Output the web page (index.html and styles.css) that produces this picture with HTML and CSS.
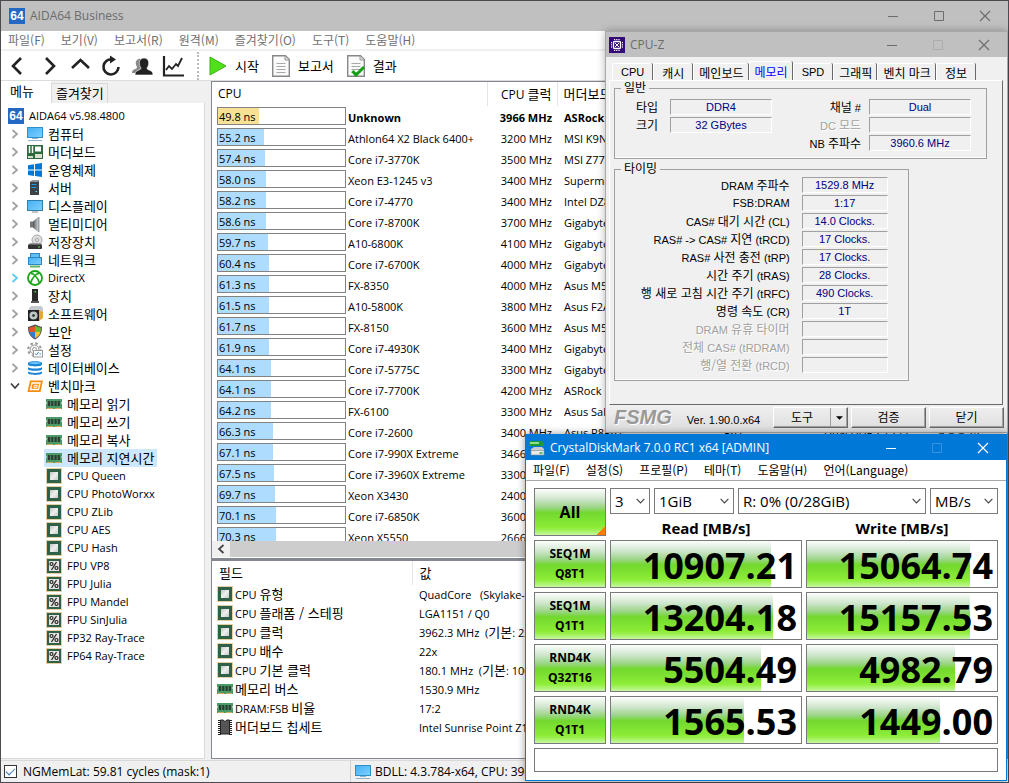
FILE: index.html
```html
<!DOCTYPE html>
<html lang="ko">
<head>
<meta charset="utf-8">
<title>AIDA64 Business</title>
<link rel="stylesheet" href="styles.css">
</head>
<body>
<svg class="defs" aria-hidden="true">
  <defs>
    <linearGradient id="g-screen" x1="0" y1="0" x2="1" y2="1"><stop offset="0" stop-color="#43b0f4"/><stop offset="1" stop-color="#7fd0ff"/></linearGradient>
    <linearGradient id="g-die" x1="0" y1="0" x2="1" y2="1"><stop offset="0" stop-color="#c4c4c4"/><stop offset=".5" stop-color="#efefef"/><stop offset="1" stop-color="#c9c9c9"/></linearGradient>
    <linearGradient id="g-metal" x1="0" y1="0" x2="1" y2="0"><stop offset="0" stop-color="#555"/><stop offset="1" stop-color="#c4ccd2"/></linearGradient>
  </defs>
  <symbol id="i-64" viewBox="0 0 16 16"><rect width="16" height="16" fill="#2468c4"/><text x="8" y="12" text-anchor="middle" font-family="Liberation Sans, sans-serif" font-size="12" font-weight="bold" fill="#fff">64</text></symbol>
  <symbol id="i-pc" viewBox="0 0 16 16"><rect x=".5" y="1.500" width="15" height="10" fill="url(#g-screen)" stroke="#2f8fc9"/><path d="M5 12.500h6M1 14.500h14" stroke="#8fb4c9" stroke-width="1"/></symbol>
  <symbol id="i-display" viewBox="0 0 16 16"><rect x=".5" y="2.500" width="15" height="10" fill="url(#g-screen)" stroke="#2f7fae"/><path d="M5 14h6" stroke="#888"/></symbol>
  <symbol id="i-board" viewBox="0 0 16 16"><rect y="1" width="16" height="14" fill="#2d6b3d"/><path d="M2.500 2v7M5.500 2v7" stroke="#fff" stroke-width="1.500"/><rect x="8" y="2.500" width="6" height="5" fill="#fff"/><path d="M1 12h5v2H1zM8 10h7v4H8z" fill="#d8e0d0"/></symbol>
  <symbol id="i-win" viewBox="0 0 16 16"><path d="M1 3.200 7 2.300V7.600H1zM8 2.100 15 1v6.600H8zM1 8.600h6V14l-6-.9zM8 8.600h7V15l-7-1z" fill="#0078d7"/></symbol>
  <symbol id="i-server" viewBox="0 0 16 16"><path d="M3 2l2-1.500h7V15H3z" fill="#3b4248"/><path d="M3 2l2-1.500h7L11 2z" fill="#8b9299"/><path d="M4.500 4.500h5M4.500 7.500h5" stroke="#1e9be8"/><path d="M8.500 11.500h1.500" stroke="#6cdcff"/></symbol>
  <symbol id="i-speaker" viewBox="0 0 16 16"><path d="M3 5.500h3v6H3z" fill="#777"/><path d="M6 5.500 11 1v15l-5-4.500z" fill="url(#g-metal)"/><path d="M11 1h1.500v15H11z" fill="#9aa3aa"/></symbol>
  <symbol id="i-disk" viewBox="0 0 16 16"><circle cx="10" cy="6" r="5" fill="#ddd" stroke="#aaa"/><circle cx="10" cy="6" r="1.500" fill="#fff" stroke="#999"/><path d="M1 11l2-2h11l1 2z" fill="#999"/><rect x="1" y="10.500" width="14" height="4.500" rx="1" fill="#333"/><path d="M11 13h2" stroke="#5de05d"/></symbol>
  <symbol id="i-net" viewBox="0 0 16 16"><rect x="3.500" y="1.500" width="9" height="7" fill="#5fc0f6" stroke="#2f86c2"/><rect x="1.500" y="5.500" width="13" height="7" fill="url(#g-screen)" stroke="#2f86c2"/><path d="M3 14.500h10" stroke="#5cb860" stroke-width="2"/></symbol>
  <symbol id="i-xbox" viewBox="0 0 16 16"><circle cx="8" cy="8" r="7" fill="#fff" stroke="#16a516" stroke-width="1.800"/><path d="M3.500 13C4.500 9.500 6.500 7 8 5.500 9.500 7 11.500 9.500 12.500 13M4 3.500c1.500 0 3 1 4 2 1-1 2.500-2 4-2" fill="none" stroke="#16a516" stroke-width="1.600"/></symbol>
  <symbol id="i-device" viewBox="0 0 16 16"><path d="M5 1h6v12H5z" fill="#2a2a2a"/><path d="M4 13h8v2H4z" fill="#555"/><path d="M7.500 3h1.500v1.500H7.500z" fill="#4fdc4f"/></symbol>
  <symbol id="i-soft" viewBox="0 0 16 16"><path d="M2 2l2-2h10l2 2v8l-4 5H2z" fill="#c4c9cd"/><path d="M12 4l4 2v6l-4 3z" fill="#e8a33c"/><rect x="1" y="4" width="11" height="11" fill="#222"/><circle cx="6.500" cy="9.500" r="4" fill="#bfc6ca"/><circle cx="6.500" cy="9.500" r="1.300" fill="#222"/></symbol>
  <symbol id="i-shield" viewBox="0 0 16 16"><path d="M8 .5 15 3c0 6-2 10-7 12.500C3 13 1 9 1 3z" fill="#555"/><path d="M8 2v6H2.500C2 6.500 2 5 2 3.700z" fill="#e8502a"/><path d="M8 2l6 1.700C14 5 14 6.500 13.500 8H8z" fill="#6cba2d"/><path d="M2.500 8H8v6.300C5 12.800 3.300 11 2.500 8z" fill="#2a7fd4"/><path d="M8 8h5.500c-.8 3-2.500 4.800-5.500 6.300z" fill="#f4c22a"/></symbol>
  <symbol id="i-gear" viewBox="0 0 16 16"><circle cx="7.500" cy="7.500" r="4.500" fill="#f2f2f2" stroke="#999"/><circle cx="7.500" cy="7.500" r="6.300" fill="none" stroke="#999" stroke-width="2" stroke-dasharray="2.500 2.450"/><circle cx="7.500" cy="7.500" r="2" fill="#fff" stroke="#999"/><rect x="6.500" y="8.500" width="9" height="6.500" fill="#fff" stroke="#999"/><path d="M8 11.500l1.500 1.500 2-3M12.500 12h1.500" fill="none" stroke="#3a8ad0"/></symbol>
  <symbol id="i-db" viewBox="0 0 16 16"><path d="M1 3c0-2.500 14-2.500 14 0v1.500c0 2.500-14 2.500-14 0zM1 7.300c2 1.700 12 1.700 14 0v1.600c0 2.500-14 2.500-14 0zM1 11.600c2 1.700 12 1.700 14 0V13c0 2.500-14 2.500-14 0z" fill="#1784d8"/><ellipse cx="8" cy="3" rx="6" ry="1.200" fill="#6cc0f4"/></symbol>
  <symbol id="i-bench" viewBox="0 0 16 16"><path d="M3 2.500h13L13.500 14H.5z" fill="#f78d0c"/><path d="M5 5h8l-1.500 6.500h-8z" fill="none" stroke="#fff" stroke-width="1.300"/><path d="M7.300 7.300h3l-.5 2h-3z" fill="none" stroke="#fff"/></symbol>
  <symbol id="i-ram" viewBox="0 0 16 16"><path d="M0 3h16v3l-1 1 1 1v5H0V8l1-1-1-1z" fill="#4a9a68"/><path d="M2 5h2.200v5H2zM5.200 5h2.200v5H5.200zM8.500 5h2.200v5H8.500zM11.700 5h2.200v5h-2.200z" fill="#2c3c32"/><path d="M1 12.500h6M9 12.500h6" stroke="#d8a860"/></symbol>
  <symbol id="i-cpu" viewBox="0 0 16 16"><rect x=".5" y=".5" width="15" height="15" fill="none" stroke="#c8a040" stroke-dasharray="1 1"/><rect x="1" y="1" width="14" height="14" fill="#2f6048"/><rect x="4" y="4" width="8" height="8" fill="url(#g-die)"/></symbol>
  <symbol id="i-fpu" viewBox="0 0 16 16"><rect x=".5" y=".5" width="15" height="15" fill="none" stroke="#c8a040" stroke-dasharray="1 1"/><rect x="1" y="1" width="14" height="14" fill="#2f6048"/><rect x="3" y="3" width="10" height="10" fill="#e4e4e4"/><path d="M5.500 12 10.500 4" stroke="#222" stroke-width="1.200"/><circle cx="5.500" cy="6" r="1.500" fill="none" stroke="#222" stroke-width="1.200"/><circle cx="10.500" cy="10" r="1.500" fill="none" stroke="#222" stroke-width="1.200"/></symbol>
  <symbol id="i-chip" viewBox="0 0 16 16"><path d="M2.500 1v15M13.500 1v15" stroke="#222" stroke-width="3" stroke-dasharray="1 1"/><path d="M3.500 1h2.500l2 1.500L10 1h2.500v14h-9z" fill="#555" stroke="#222"/></symbol>
  <symbol id="i-doc" viewBox="0 0 18 22"><path d="M.7.7h12.800l3.800 3.800v16.800H.7z" fill="#fafafa" stroke="#888" stroke-width="1.400"/><path d="M13 1v4h4" fill="#ddd" stroke="#999"/><path d="M4.500 8.500h9M4.500 11.500h9M4.500 14.500h9M4.500 17.500h9" stroke="#a8a8a8"/></symbol>
  <symbol id="i-chev" viewBox="0 0 8 10"><path d="M1.500 1 6 5 1.500 9" fill="none" stroke="currentColor" stroke-width="1.700"/></symbol>
  <symbol id="i-chevdown" viewBox="0 0 10 6"><path d="M.7.7 5 5 9.300.7" fill="none" stroke="currentColor" stroke-width="1.300"/></symbol>
  <symbol id="i-min" viewBox="0 0 12 12"><path d="M1 6.500h10" stroke="currentColor"/></symbol>
  <symbol id="i-max" viewBox="0 0 12 12"><path d="M1.500 1.500h9v9h-9z" fill="none" stroke="currentColor"/></symbol>
  <symbol id="i-close" viewBox="0 0 12 12"><path d="M1 1l10 10M11 1 1 11" stroke="currentColor" stroke-width="1.200"/></symbol>
</svg>

<main class="window aida">
  <header class="titlebar">
    <svg class="icon"><use href="#i-64"/></svg>
    <h1 class="title">AIDA64 Business</h1>
    <button class="winbtn" aria-label="최소화"><svg><use href="#i-min"/></svg></button>
    <button class="winbtn" aria-label="최대화"><svg><use href="#i-max"/></svg></button>
    <button class="winbtn" aria-label="닫기"><svg><use href="#i-close"/></svg></button>
  </header>
  <nav class="menubar ko">
    <button>파일(F)</button><button>보기(V)</button><button>보고서(R)</button><button>원격(M)</button><button>즐겨찾기(O)</button><button>도구(T)</button><button>도움말(H)</button>
  </nav>
  <div class="toolbar ko">
    <button class="tool" aria-label="뒤로"><svg viewBox="0 0 22 22"><path d="M14 3 6 11l8 8" fill="none" stroke="#222" stroke-width="2.600"/></svg></button>
    <button class="tool" aria-label="앞으로"><svg viewBox="0 0 22 22"><path d="M8 3l8 8-8 8" fill="none" stroke="#222" stroke-width="2.600"/></svg></button>
    <button class="tool" aria-label="위로"><svg viewBox="0 0 22 22"><path d="M3 13 11.500 5 20 13" fill="none" stroke="#222" stroke-width="2.600"/></svg></button>
    <button class="tool" aria-label="새로 고침"><svg viewBox="0 0 22 22"><path d="M12 4.500A7.500 7.500 0 1 0 18.500 12" fill="none" stroke="#222" stroke-width="2.600"/><path d="M10 .5l6 4-6 4z" fill="#222"/></svg></button>
    <button class="tool" aria-label="사용자"><svg viewBox="0 0 22 22"><path d="M1 18c0-5 5-3 5-6-3-5 0-9 4-8v14z" fill="#888"/><path d="M4 20c0-6 6-4 6-7-3-4-2-10 3-10s6 6 3 10c0 3 6 1 6 7z" fill="#222" stroke="#fff" stroke-width=".6"/></svg></button>
    <button class="tool" aria-label="그래프"><svg viewBox="0 0 22 22"><path d="M2 1v19.500h20" fill="none" stroke="#222" stroke-width="2.200"/><path d="M4 15l3-4 3 3 4-5 2 2 4-8" fill="none" stroke="#222" stroke-width="1.800"/></svg></button>
    <span class="grip"></span>
    <button class="tool-text"><svg viewBox="0 0 18 22"><path d="M1 2l16 9-16 9z" fill="#4fe01a" stroke="#37b313"/></svg>시작</button>
    <button class="tool-text"><svg><use href="#i-doc"/></svg>보고서</button>
    <button class="tool-text"><svg viewBox="0 0 18 22"><use href="#i-doc" width="18" height="22"/><path d="M5.500 16l3.500 4 8-8" fill="none" stroke="#14a014" stroke-width="3"/></svg>결과</button>
  </div>

  <div class="workspace">
    <aside class="side">
      <div class="side-tabs ko" role="tablist"><button role="tab" aria-selected="true">메뉴</button><button role="tab">즐겨찾기</button></div>
      <ul class="tree">
        <li class="root"><svg class="icon"><use href="#i-64"/></svg>AIDA64 v5.98.4800</li>
        <li class="ko"><svg class="chev"><use href="#i-chev"/></svg><svg class="icon"><use href="#i-pc"/></svg>컴퓨터</li>
        <li class="ko"><svg class="chev"><use href="#i-chev"/></svg><svg class="icon"><use href="#i-board"/></svg>머더보드</li>
        <li class="ko"><svg class="chev"><use href="#i-chev"/></svg><svg class="icon"><use href="#i-win"/></svg>운영체제</li>
        <li class="ko"><svg class="chev"><use href="#i-chev"/></svg><svg class="icon"><use href="#i-server"/></svg>서버</li>
        <li class="ko"><svg class="chev"><use href="#i-chev"/></svg><svg class="icon"><use href="#i-display"/></svg>디스플레이</li>
        <li class="ko"><svg class="chev"><use href="#i-chev"/></svg><svg class="icon"><use href="#i-speaker"/></svg>멀티미디어</li>
        <li class="ko"><svg class="chev"><use href="#i-chev"/></svg><svg class="icon"><use href="#i-disk"/></svg>저장장치</li>
        <li class="ko"><svg class="chev"><use href="#i-chev"/></svg><svg class="icon"><use href="#i-net"/></svg>네트워크</li>
        <li class="hot"><svg class="chev"><use href="#i-chev"/></svg><svg class="icon"><use href="#i-xbox"/></svg>DirectX</li>
        <li class="ko"><svg class="chev"><use href="#i-chev"/></svg><svg class="icon"><use href="#i-device"/></svg>장치</li>
        <li class="ko"><svg class="chev"><use href="#i-chev"/></svg><svg class="icon"><use href="#i-soft"/></svg>소프트웨어</li>
        <li class="ko"><svg class="chev"><use href="#i-chev"/></svg><svg class="icon"><use href="#i-shield"/></svg>보안</li>
        <li class="ko"><svg class="chev"><use href="#i-chev"/></svg><svg class="icon"><use href="#i-gear"/></svg>설정</li>
        <li class="ko"><svg class="chev"><use href="#i-chev"/></svg><svg class="icon"><use href="#i-db"/></svg>데이터베이스</li>
        <li class="ko open"><svg class="chev"><use href="#i-chev"/></svg><svg class="icon"><use href="#i-bench"/></svg>벤치마크</li>
        <li class="child ko"><svg class="icon"><use href="#i-ram"/></svg>메모리 읽기</li>
        <li class="child ko"><svg class="icon"><use href="#i-ram"/></svg>메모리 쓰기</li>
        <li class="child ko"><svg class="icon"><use href="#i-ram"/></svg>메모리 복사</li>
        <li class="child ko selected"><svg class="icon"><use href="#i-ram"/></svg>메모리 지연시간</li>
        <li class="child"><svg class="icon"><use href="#i-cpu"/></svg>CPU Queen</li>
        <li class="child"><svg class="icon"><use href="#i-cpu"/></svg>CPU PhotoWorxx</li>
        <li class="child"><svg class="icon"><use href="#i-cpu"/></svg>CPU ZLib</li>
        <li class="child"><svg class="icon"><use href="#i-cpu"/></svg>CPU AES</li>
        <li class="child"><svg class="icon"><use href="#i-cpu"/></svg>CPU Hash</li>
        <li class="child"><svg class="icon"><use href="#i-fpu"/></svg>FPU VP8</li>
        <li class="child"><svg class="icon"><use href="#i-fpu"/></svg>FPU Julia</li>
        <li class="child"><svg class="icon"><use href="#i-fpu"/></svg>FPU Mandel</li>
        <li class="child"><svg class="icon"><use href="#i-fpu"/></svg>FPU SinJulia</li>
        <li class="child"><svg class="icon"><use href="#i-fpu"/></svg>FP32 Ray-Trace</li>
        <li class="child"><svg class="icon"><use href="#i-fpu"/></svg>FP64 Ray-Trace</li>
      </ul>
    </aside>

    <div class="content">
      <section class="panel results">
        <div class="results-view">
          <table class="bench">
            <colgroup><col class="c-bar"><col class="c-name"><col class="c-clock"><col class="c-board"><col class="c-set"><col class="c-mem"><col></colgroup>
            <thead><tr><th colspan="2">CPU</th><th class="num">CPU <span class="ko">클럭</span></th><th class="ko">머더보드</th><th></th><th></th><th></th></tr></thead>
            <tbody>
              <tr class="own"><td><div class="bar"><i style="width:32%"></i><span>49.8 ns</span></div></td><td>Unknown</td><td class="num">3966 MHz</td><td>ASRock</td></tr>
              <tr><td><div class="bar"><i style="width:36%"></i><span>55.2 ns</span></div></td><td>Athlon64 X2 Black 6400+</td><td class="num">3200 MHz</td><td>MSI K9N</td></tr>
              <tr><td><div class="bar"><i style="width:37%"></i><span>57.4 ns</span></div></td><td>Core i7-3770K</td><td class="num">3500 MHz</td><td>MSI Z77</td></tr>
              <tr><td><div class="bar"><i style="width:38%"></i><span>58.0 ns</span></div></td><td>Xeon E3-1245 v3</td><td class="num">3400 MHz</td><td>Supermicro</td></tr>
              <tr><td><div class="bar"><i style="width:38%"></i><span>58.2 ns</span></div></td><td>Core i7-4770</td><td class="num">3400 MHz</td><td>Intel DZ8</td></tr>
              <tr><td><div class="bar"><i style="width:38%"></i><span>58.6 ns</span></div></td><td>Core i7-8700K</td><td class="num">3700 MHz</td><td>Gigabyte</td></tr>
              <tr><td><div class="bar"><i style="width:39%"></i><span>59.7 ns</span></div></td><td>A10-6800K</td><td class="num">4100 MHz</td><td>Gigabyte</td></tr>
              <tr><td><div class="bar"><i style="width:40%"></i><span>60.4 ns</span></div></td><td>Core i7-6700K</td><td class="num">4000 MHz</td><td>Gigabyte</td></tr>
              <tr><td><div class="bar"><i style="width:40%"></i><span>61.3 ns</span></div></td><td>FX-8350</td><td class="num">4000 MHz</td><td>Asus M5</td></tr>
              <tr><td><div class="bar"><i style="width:40%"></i><span>61.5 ns</span></div></td><td>A10-5800K</td><td class="num">3800 MHz</td><td>Asus F2A</td></tr>
              <tr><td><div class="bar"><i style="width:40%"></i><span>61.7 ns</span></div></td><td>FX-8150</td><td class="num">3600 MHz</td><td>Asus M5</td></tr>
              <tr><td><div class="bar"><i style="width:40%"></i><span>61.9 ns</span></div></td><td>Core i7-4930K</td><td class="num">3400 MHz</td><td>Gigabyte</td></tr>
              <tr><td><div class="bar"><i style="width:42%"></i><span>64.1 ns</span></div></td><td>Core i7-5775C</td><td class="num">3300 MHz</td><td>Gigabyte</td></tr>
              <tr><td><div class="bar"><i style="width:42%"></i><span>64.1 ns</span></div></td><td>Core i7-7700K</td><td class="num">4200 MHz</td><td>ASRock</td></tr>
              <tr><td><div class="bar"><i style="width:42%"></i><span>64.2 ns</span></div></td><td>FX-6100</td><td class="num">3300 MHz</td><td>Asus Sab</td></tr>
              <tr><td><div class="bar"><i style="width:43%"></i><span>66.3 ns</span></div></td><td>Core i7-2600</td><td class="num">3400 MHz</td><td>Asus P8P67</td><td>P67</td><td>Dual DDR3-1333</td><td>9-9-9-24</td></tr>
              <tr><td><div class="bar"><i style="width:43%"></i><span>67.1 ns</span></div></td><td>Core i7-990X Extreme</td><td class="num">3466 MHz</td><td></td></tr>
              <tr><td><div class="bar"><i style="width:44%"></i><span>67.5 ns</span></div></td><td>Core i7-3960X Extreme</td><td class="num">3300 MHz</td><td></td></tr>
              <tr><td><div class="bar"><i style="width:45%"></i><span>69.7 ns</span></div></td><td>Xeon X3430</td><td class="num">2400 MHz</td><td></td></tr>
              <tr><td><div class="bar"><i style="width:46%"></i><span>70.1 ns</span></div></td><td>Core i7-6850K</td><td class="num">3600 MHz</td><td></td></tr>
              <tr><td><div class="bar"><i style="width:46%"></i><span>70.3 ns</span></div></td><td>Xeon X5550</td><td class="num">2666 MHz</td><td></td></tr>
            </tbody>
          </table>
        </div>
        <div class="scroll"><button aria-label="왼쪽으로"><svg><use href="#i-chev"/></svg></button><div class="thumb"></div></div>
      </section>
      <section class="panel details">
        <table class="fields">
          <thead><tr class="ko"><th>필드</th><th>값</th></tr></thead>
          <tbody>
            <tr><td><svg class="icon"><use href="#i-cpu"/></svg>CPU <span class="ko">유형</span></td><td>QuadCore &nbsp; (Skylake-S)</td></tr>
            <tr><td><svg class="icon"><use href="#i-cpu"/></svg>CPU <span class="ko">플래폼 / 스테핑</span></td><td>LGA1151 / Q0</td></tr>
            <tr><td><svg class="icon"><use href="#i-cpu"/></svg>CPU <span class="ko">클럭</span></td><td>3962.3 MHz &nbsp;(<span class="ko">기본</span>: 2200)</td></tr>
            <tr><td><svg class="icon"><use href="#i-cpu"/></svg>CPU <span class="ko">배수</span></td><td>22x</td></tr>
            <tr><td><svg class="icon"><use href="#i-cpu"/></svg>CPU <span class="ko">기본 클럭</span></td><td>180.1 MHz &nbsp;(<span class="ko">기본</span>: 100)</td></tr>
            <tr><td><svg class="icon"><use href="#i-ram"/></svg><span class="ko">메모리 버스</span></td><td>1530.9 MHz</td></tr>
            <tr><td><svg class="icon"><use href="#i-ram"/></svg>DRAM:FSB <span class="ko">비율</span></td><td>17:2</td></tr>
            <tr><td><svg class="icon"><use href="#i-chip"/></svg><span class="ko">머더보드 칩세트</span></td><td>Intel Sunrise Point Z170</td></tr>
          </tbody>
        </table>
      </section>
    </div>
  </div>

  <footer class="status">
    <label class="status-left"><input type="checkbox" checked>NGMemLat: 59.81 cycles (mask:1)</label>
    <div class="status-right"><svg class="icon"><use href="#i-pc"/></svg>BDLL: 4.3.784-x64, CPU: 3962 MHz</div>
  </footer>
</main>

<section class="window cpuz">
  <header class="titlebar">
    <svg class="icon" viewBox="0 0 16 16"><rect width="16" height="16" fill="#330a78"/><rect x="4.500" y="4.500" width="7" height="7" rx="1" fill="none" stroke="#fff" stroke-width="1.300"/><path d="M6 6l4 4M10 6l-4 4" stroke="#fff"/><path d="M5 2.500h6M5 13.500h6M2.500 5v6M13.500 5v6" stroke="#fff" stroke-dasharray="1.200 1"/></svg>
    <h2 class="title">CPU-Z</h2>
    <button class="winbtn" aria-label="최소화"><svg><use href="#i-min"/></svg></button>
    <button class="winbtn" aria-label="최대화" disabled><svg><use href="#i-max"/></svg></button>
    <button class="winbtn" aria-label="닫기"><svg><use href="#i-close"/></svg></button>
  </header>
  <div class="z-body">
    <div class="z-tabs" role="tablist">
      <button role="tab">CPU</button><button role="tab" class="k">캐시</button><button role="tab" class="k">메인보드</button><button role="tab" class="k" aria-selected="true">메모리</button><button role="tab">SPD</button><button role="tab" class="k">그래픽</button><button role="tab" class="k">벤치 마크</button><button role="tab" class="k">정보</button>
    </div>
    <div class="z-pane">
      <fieldset class="z-general">
        <legend class="k">일반</legend>
        <div class="z-col z-short">
          <label class="k" for="ztype">타입</label><input id="ztype" readonly value="DDR4">
          <label class="k" for="zsize">크기</label><input id="zsize" readonly value="32 GBytes">
        </div>
        <div class="z-col z-wide">
          <label for="zch"><span class="k">채널</span> #</label><input id="zch" readonly value="Dual">
          <label class="off" for="zdc">DC <span class="k">모드</span></label><input id="zdc" readonly>
          <label for="znb">NB <span class="k">주파수</span></label><input id="znb" readonly value="3960.6 MHz">
        </div>
      </fieldset>
      <fieldset class="z-timing">
        <legend class="k">타이밍</legend>
        <div class="z-col z-time">
          <label for="t1">DRAM <span class="k">주파수</span></label><input id="t1" readonly value="1529.8 MHz">
          <label for="t2">FSB:DRAM</label><input id="t2" readonly value="1:17">
          <label for="t3">CAS# <span class="k">대기 시간</span> (CL)</label><input id="t3" readonly value="14.0 Clocks.">
          <label for="t4">RAS# -&gt; CAS# <span class="k">지연</span> (tRCD)</label><input id="t4" readonly value="17 Clocks.">
          <label for="t5">RAS# <span class="k">사전 충전</span> (tRP)</label><input id="t5" readonly value="17 Clocks.">
          <label for="t6"><span class="k">시간 주기</span> (tRAS)</label><input id="t6" readonly value="28 Clocks.">
          <label for="t7"><span class="k">행 새로 고침 시간 주기</span> (tRFC)</label><input id="t7" readonly value="490 Clocks.">
          <label for="t8"><span class="k">명령 속도</span> (CR)</label><input id="t8" readonly value="1T">
          <label class="off" for="t9">DRAM <span class="k">유휴 타이머</span></label><input id="t9" readonly>
          <label class="off" for="t10"><span class="k">전체</span> CAS# (tRDRAM)</label><input id="t10" readonly>
          <label class="off" for="t11"><span class="k">행/열 전환</span> (tRCD)</label><input id="t11" readonly>
        </div>
      </fieldset>
    </div>
  </div>
  <footer class="z-foot">
    <strong class="brand">FSMG</strong>
    <span class="ver">Ver. 1.90.0.x64</span>
    <div class="z-split"><button class="k">도구</button><button aria-label="도구 메뉴"><svg viewBox="0 0 8 4"><path d="M0 0h8L4 4z"/></svg></button></div>
    <button class="z-btn k">검증</button>
    <button class="z-btn k">닫기</button>
  </footer>
</section>

<section class="window cdm">
  <header class="titlebar">
    <svg class="icon" viewBox="0 0 16 16"><path d="M0 1h13l2 2v3H0z" fill="#1f9a34"/><path d="M1 3h9" stroke="#b9f5a6" stroke-width="1.500"/><path d="M2 9l3-2h8l2 2v6H2z" fill="#c9cdd0"/><path d="M2 10.500h13V15H2z" fill="#e6e8ea" stroke="#888" stroke-width=".6"/><path d="M10.500 13h3" stroke="#2fae3c" stroke-width="1.500"/></svg>
    <h2 class="title">CrystalDiskMark 7.0.0 RC1 x64 [ADMIN]</h2>
    <button class="winbtn" aria-label="최소화"><svg><use href="#i-min"/></svg></button>
    <button class="winbtn" aria-label="최대화" disabled><svg><use href="#i-max"/></svg></button>
    <button class="winbtn" aria-label="닫기"><svg><use href="#i-close"/></svg></button>
  </header>
  <nav class="menubar ko">
    <button>파일(F)</button><button>설정(S)</button><button>프로필(P)</button><button>테마(T)</button><button>도움말(H)</button><button>언어(Language)</button>
  </nav>
  <div class="d-grid">
    <button class="d-run d-all">All</button>
    <div class="d-head">
      <div class="d-selects">
        <div class="sel s-count"><select aria-label="횟수"><option>3</option></select><svg><use href="#i-chevdown"/></svg></div>
        <div class="sel s-size"><select aria-label="크기"><option>1GiB</option></select><svg><use href="#i-chevdown"/></svg></div>
        <div class="sel s-drive"><select aria-label="드라이브"><option>R: 0% (0/28GiB)</option></select><svg><use href="#i-chevdown"/></svg></div>
        <div class="sel s-unit"><select aria-label="단위"><option>MB/s</option></select><svg><use href="#i-chevdown"/></svg></div>
      </div>
      <div class="d-cols"><strong>Read [MB/s]</strong><strong>Write [MB/s]</strong></div>
    </div>
    <button class="d-run">SEQ1M<br>Q8T1</button>
    <div class="meter"><i style="width:84%"></i><output>10907.21</output></div>
    <div class="meter"><i style="width:86%"></i><output>15064.74</output></div>
    <button class="d-run">SEQ1M<br>Q1T1</button>
    <div class="meter"><i style="width:85%"></i><output>13204.18</output></div>
    <div class="meter"><i style="width:86%"></i><output>15157.53</output></div>
    <button class="d-run">RND4K<br>Q32T16</button>
    <div class="meter"><i style="width:79%"></i><output>5504.49</output></div>
    <div class="meter"><i style="width:78%"></i><output>4982.79</output></div>
    <button class="d-run">RND4K<br>Q1T1</button>
    <div class="meter"><i style="width:70%"></i><output>1565.53</output></div>
    <div class="meter"><i style="width:70%"></i><output>1449.00</output></div>
    <input class="d-note" aria-label="메모">
  </div>
</section>
</body>
</html>
```
FILE: styles.css
```css
* { box-sizing: border-box; }

html, body { height: 100%; }

body {
  margin: 0;
  position: relative;
  overflow: hidden;
  padding: 1px;
  background: #4c4a50;
  color: #000;
  font: 11px/18px "Open Sans", "Noto Sans CJK KR", sans-serif;
}

button {
  margin: 0;
  padding: 0;
  border: 0;
  background: none;
  color: inherit;
  font: inherit;
}

.defs { position: absolute; width: 0; height: 0; }
.ko { font-family: "Noto Sans CJK KR", sans-serif; font-size: 13px; }
.k { font-family: "Noto Sans CJK KR", sans-serif; font-size: 12px; }
.icon { width: 16px; height: 16px; flex: none; }

/* Window frame */
.window { display: flex; flex-direction: column; }
.titlebar {
  display: flex;
  align-items: center;
  gap: 5px;
  flex: none;
  padding-left: 8px;
  background: #c0c0c0;
  color: #6c6c6c;
}
.title { flex: 1; margin: 0; font-size: 12px; font-weight: 400; white-space: nowrap; }
.winbtn { width: 46px; height: 25px; margin-left: -5px; display: grid; place-items: center; }
.winbtn svg { width: 12px; height: 12px; }
.winbtn:disabled { color: #acacac; }
.menubar { display: flex; gap: 16px; flex: none; padding: 0 7px; background: #fff; font-size: 12px; line-height: 18px; }

/* AIDA64 */
.aida { height: 100%; background: #f0f0f0; }
.aida .titlebar { height: 30px; }
.aida .menubar { height: 20px; border-bottom: 2px solid #f0f0f0; color: #707070; }
.toolbar {
  display: flex;
  align-items: center;
  gap: 9px;
  flex: none;
  height: 30px;
  padding-left: 6px;
  background: #fff;
  border-bottom: 1px solid #dcdcdc;
}
.tool { width: 22px; height: 22px; }
.tool svg { width: 22px; height: 22px; display: block; }
.grip { height: 28px; margin: 0 1px 0 4px; border-left: 2px dotted #bbb; }
.tool-text { display: flex; align-items: center; gap: 8px; margin-right: 4px; line-height: 16px; }
.tool-text svg { width: 18px; height: 22px; }

.workspace { flex: 1; min-height: 0; display: flex; }
.side { flex: none; width: 204px; display: flex; flex-direction: column; }
.side-tabs { display: flex; align-items: flex-end; height: 22px; }
.side-tabs button { height: 20px; padding: 0 3px 1px 4px; border: 1px solid #d9d9d9; border-bottom: 0; }
.side-tabs [aria-selected] {
  height: 22px;
  padding: 0 16px 4px 8px;
  border-color: #fff;
  background: #fff;
}
.tree {
  flex: 1;
  margin: 0;
  padding: 4px 0 0;
  border-right: 1px solid #d9d9d9;
  border-bottom: 1px solid #d9d9d9;
  background: #fff;
  list-style: none;
}
.tree li {
  display: flex;
  align-items: center;
  gap: 5px;
  width: max-content;
  height: 18px;
  padding: 0 4px 0 10px;
}
.tree .root { padding-left: 7px; }
.tree .child { margin-left: 43px; padding: 0 3px 0 2px; }
.tree .selected { background: #cce8ff; }
.chev { width: 8px; height: 10px; margin-right: 3px; color: #a0a0a0; }
.hot .chev { color: #55ccf5; }
.open .chev { color: #404040; transform: rotate(90deg); }

.content { flex: 1; min-width: 0; margin-left: 6px; display: flex; flex-direction: column; }
.panel { border: 1px solid #828790; background: #fff; overflow: hidden; }
.results { flex: 1; min-height: 0; display: flex; flex-direction: column; }
.results-view { flex: 1; min-height: 0; overflow: hidden; }
table { width: 100%; table-layout: fixed; border-collapse: collapse; }
th { font-weight: 400; text-align: left; }
td, th { padding: 0; white-space: nowrap; overflow: hidden; }
.bench th { height: 24px; padding: 0 6px; border-right: 1px solid #e5e5e5; font-size: 12px; }
.bench th.ko { font-size: 13px; }
.bench td { height: 21px; padding-top: 2px; }
.bench td:first-child { padding: 0 0 2px 5px; }
.bench td:nth-child(n+4) { padding-left: 7px; }
.bench .num { padding-right: 5px; text-align: right; }
.c-bar { width: 136px; }
.c-name { width: 139px; }
.c-clock { width: 70px; }
.c-board { width: 160px; }
.c-set { width: 100px; }
.c-mem { width: 114px; }
.own td { font-weight: 700; }
.bar { position: relative; width: 129px; height: 18px; border: 1px solid #828282; background: #fff; line-height: 17px; }
.bar i { position: absolute; inset: 0 auto 0 0; background: #aedcff; }
.own .bar i { background: #f8e094; }
.bar span { position: relative; padding-left: 1px; font-weight: 400; }

.scroll { display: flex; flex: none; height: 16px; margin-bottom: 1px; background: #f0f0f0; }
.scroll button { width: 18px; }
.scroll svg { width: 8px; height: 10px; color: #404040; transform: rotate(180deg); }
.thumb { flex: 1; background: #cdcdcd; }

.details { flex: none; height: 200px; border-top-width: 2px; }
.fields th { height: 24px; padding-left: 7px; border-right: 1px solid #e5e5e5; }
.fields th:first-child { width: 200px; }
.fields td { height: 19px; }
.fields td:first-child { padding-left: 5px; }
.fields td + td { padding-left: 7px; }
.fields .icon { margin-right: 2px; vertical-align: -3px; }

.status {
  display: flex;
  flex: none;
  height: 22px;
  margin-top: 1px;
  border-top: 1px solid #d9d9d9;
  font-size: 12px;
  line-height: 20px;
}
.status-left { display: flex; align-items: center; gap: 6px; width: 350px; padding-left: 3px; border-right: 1px solid #d0d0d0; }
.status-left input {
  appearance: none;
  display: grid;
  place-items: center;
  width: 13px;
  height: 13px;
  margin: 0;
  border: 1px solid #333;
  background: #fff;
}
.status-left input:checked::before {
  content: "";
  width: 8px;
  height: 4px;
  margin-bottom: 3px;
  border: solid #3477b5;
  border-width: 0 0 1px 1px;
  transform: rotate(-45deg);
}
.status-right { display: flex; align-items: center; gap: 4px; padding-left: 4px; }

/* CPU-Z */
.cpuz {
  position: absolute;
  top: 31px;
  right: 1px;
  width: 403px;
  border: 1px solid #a8a8a8;
  background: #f0f0f0;
  font-family: "Liberation Sans", sans-serif;
  box-shadow: 0 0 8px rgba(0, 0, 0, .3);
}
.cpuz .titlebar { height: 25px; padding-left: 3px; font-family: "Open Sans", sans-serif; }
.z-body { padding: 4px 4px 0 3px; }
.z-tabs { display: flex; align-items: flex-end; gap: 1px; height: 19px; padding-left: 3px; }
.z-tabs button {
  height: 17px;
  padding: 0 4px 0 5px;
  border: solid #fff;
  border-width: 1px 0 0 1px;
  border-radius: 2px 2px 0 0;
  box-shadow: 1px 0 #696969;
  line-height: 15px;
}
.z-tabs button:not(.k) { padding: 0 8px; }
.z-tabs button:nth-child(2), .z-tabs button:last-child { padding: 0 8px; }
.z-tabs [aria-selected] { height: 19px; color: #00f; }
.z-pane {
  min-height: 325px;
  padding: 0 15px 0 4px;
  border: 1px solid;
  border-color: #fff #696969 #696969 #fff;
}
fieldset { margin: 0; padding: 4px 15px 7px 12px; border: 1px solid #a0a0a0; box-shadow: inset 0 -1px #fff; }
legend { height: 14px; margin-left: -6px; padding: 0 3px; line-height: 11px; }
.z-general { display: flex; justify-content: space-between; }
.z-timing { width: 79%; margin-top: 3px; padding: 1px 20px 7px 12px; }
.z-col { display: grid; grid-auto-rows: 16px; align-items: center; align-content: start; gap: 2px 12px; line-height: 16px; }
.z-col label { text-align: right; white-space: nowrap; }
.z-short { grid-template-columns: 31px 102px; }
.z-wide { grid-template-columns: auto 102px; gap: 2px 8px; }
.z-time { grid-template-columns: 1fr 86px; }
.z-col input {
  width: 100%;
  height: 16px;
  padding: 0;
  border: 1px solid;
  border-color: #a0a0a0 #fff #fff #a0a0a0;
  background: none;
  color: #000080;
  font: 11px/14px "Liberation Sans", sans-serif;
  text-align: center;
}
.off { color: #a0a0a0; text-shadow: 1px 1px #fff; }
.z-foot {
  display: flex;
  align-items: center;
  gap: 3px;
  height: 27px;
  padding: 0 3px 3px 8px;
  background: linear-gradient(#f0f0f0, #dcdcdc);
}
.brand { color: #999; font-size: 20px; font-style: italic; text-shadow: 1px 1px #fff; }
.ver { flex: 1; padding: 5px 0 0 12px; white-space: nowrap; }
.z-btn, .z-split {
  width: 75px;
  height: 21px;
  border: 1px solid;
  border-color: #fff #696969 #696969 #fff;
  box-shadow: inset -1px -1px #a0a0a0;
  line-height: 18px;
}
.z-split { display: flex; }
.z-split button { flex: 1; }
.z-split button + button { flex: none; width: 17px; border-left: 1px solid #a0a0a0; }
.z-split svg { width: 7px; height: 4px; vertical-align: middle; }

/* CrystalDiskMark */
.cdm {
  position: absolute;
  right: 2px;
  bottom: 2px;
  width: 482px;
  border: 1px solid #0078d7;
  background: #fff;
  box-shadow: 0 0 8px rgba(0, 0, 0, .4);
}
.cdm .titlebar { height: 25px; padding-left: 3px; background: #0078d7; color: #fff; }
.cdm .winbtn:disabled { color: #3a96e2; }
.cdm .menubar { height: 21px; border-bottom: 1px solid #a8a8a8; }
.d-grid {
  display: grid;
  grid-template-columns: 72px 1fr 1fr;
  grid-template-rows: repeat(5, 48px) 24px;
  gap: 4px;
  padding: 7px 8px 8px;
}
.d-run, .meter i {
  background: linear-gradient(#fcfefc, #cfe6cd 22%, #9bd587 40%, #72d82e 52%, #8eee38 85%, #c6f7a0);
}
.d-run { border: 1px solid #7a7a7a; font-size: 12px; font-weight: 700; line-height: 20px; }
.d-all { position: relative; font-size: 16px; }
.d-all::after {
  content: "";
  position: absolute;
  right: 0;
  bottom: 0;
  width: 9px;
  height: 9px;
  background: linear-gradient(135deg, transparent 50%, #ff7a00 50%);
}
.d-head { grid-column: span 2; display: flex; flex-direction: column; }
.d-selects { display: flex; gap: 4px; }
.sel { position: relative; height: 26px; }
.s-count { width: 40px; }
.s-size { width: 80px; }
.s-drive { flex: 1; }
.s-unit { width: 68px; }
.sel select {
  appearance: none;
  width: 100%;
  height: 100%;
  padding: 0 0 0 4px;
  border: 1px solid #7a7a7a;
  border-radius: 0;
  background: #fff;
  color: #000;
  font: 15px/24px "Open Sans", sans-serif;
}
.sel svg { position: absolute; right: 5px; top: 10px; width: 9px; height: 6px; color: #444; pointer-events: none; }
.d-cols { display: grid; grid-template-columns: 1fr 1fr; gap: 4px; padding-top: 4px; text-align: center; font-size: 15px; line-height: 20px; }
.meter { position: relative; border: 1px solid #7a7a7a; }
.meter i { position: absolute; inset: 0 auto 0 0; }
.meter output {
  position: relative;
  display: block;
  padding-right: 4px;
  font-size: 36px;
  font-weight: 700;
  line-height: 50px;
  text-align: right;
}
.d-note { grid-column: 1 / -1; width: 100%; height: 24px; border: 1px solid #7a7a7a; }
```
